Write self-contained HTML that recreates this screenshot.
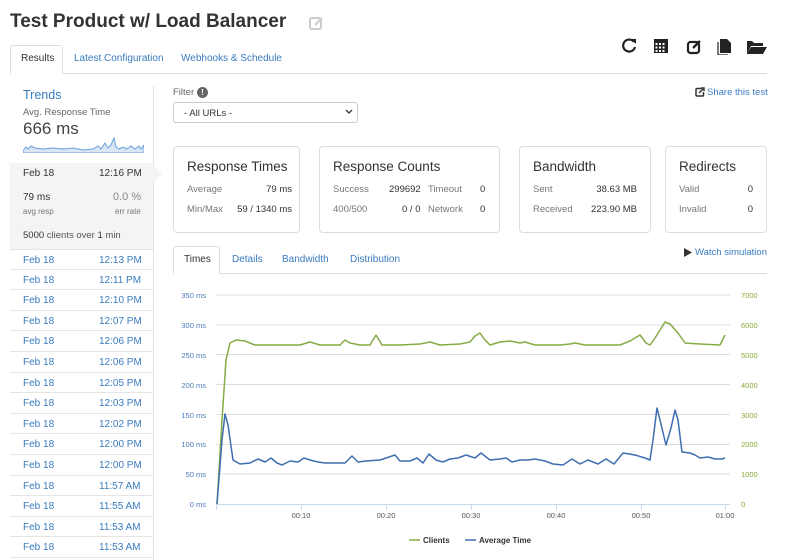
<!DOCTYPE html>
<html><head><meta charset="utf-8"><style>
*{margin:0;padding:0;box-sizing:border-box}
body{width:800px;height:560px;overflow:hidden;background:#fff;font-family:"Liberation Sans",Arial,sans-serif;color:#333;position:relative}
.a{position:absolute;white-space:nowrap}
.blue{color:#3a7bbf}
.card{position:absolute;border:1px solid #ddd;border-radius:4px;top:146px;height:87px}
.card h3{position:absolute;left:13px;top:12px;font-size:13.5px;font-weight:normal;color:#333}
.card .l{position:absolute;font-size:9.5px;color:#777}
.card .v{position:absolute;font-size:9.5px;color:#333;text-align:right}
.row{position:absolute;left:10px;width:143px;height:20.6px;border-bottom:1px solid #e5e5e5;font-size:10px;color:#3a7bbf}
.row span{position:absolute;top:5px}
</style></head><body>
<div class="a" style="left:10px;top:11px;font-size:19px;font-weight:bold;color:#333">Test Product w/ Load Balancer</div>
<svg class="a" style="left:309px;top:15px" width="16" height="16" viewBox="0 0 16 16"><rect x="1" y="3" width="11" height="11" rx="2" fill="none" stroke="#ccc" stroke-width="2"/><path d="M6 10 L13 3" stroke="#ccc" stroke-width="2"/></svg>
<svg class="a" style="left:621px;top:37px" width="150" height="18" viewBox="0 0 150 18">
<path d="M13 5 A6 6 0 1 0 14 10" fill="none" stroke="#222" stroke-width="2.2"/><path d="M10 2 L15 2 L15 7 Z" fill="#222"/>
<rect x="33" y="2" width="14" height="14" fill="#222"/><g fill="#fff"><rect x="34.5" y="6" width="2" height="2"/><rect x="38" y="6" width="2" height="2"/><rect x="41.5" y="6" width="2" height="2"/><rect x="34.5" y="9.5" width="2" height="2"/><rect x="38" y="9.5" width="2" height="2"/><rect x="41.5" y="9.5" width="2" height="2"/><rect x="34.5" y="13" width="2" height="2"/><rect x="38" y="13" width="2" height="2"/><rect x="41.5" y="13" width="2" height="2"/></g>
<rect x="67" y="5" width="11" height="11" rx="2.5" fill="none" stroke="#222" stroke-width="2.2"/><path d="M72 11 L79 4" stroke="#222" stroke-width="2.4"/>
<path d="M99 2 L106 2 L110 6 L110 16 L99 16 Z" fill="#222"/><path d="M97 5 L97 18 L107 18" fill="none" stroke="#222" stroke-width="1.2"/>
<path d="M126 4 L131 4 L133 6 L142 6 L142 9 L130 9 L126 17 Z" fill="#222"/><path d="M130 10 L146 10 L142 17 L126 17 Z" fill="#222"/>
</svg>
<div class="a" style="left:10px;top:45px;width:53px;height:29px;border:1px solid #ddd;border-bottom:1px solid #fff;border-radius:3px 3px 0 0;background:#fff;z-index:2"></div>
<div class="a" style="left:10px;top:73px;width:757px;height:1px;background:#ddd"></div>
<div class="a" style="left:21px;top:53px;font-size:10px;color:#333;z-index:3">Results</div>
<div class="a blue" style="left:74px;top:53px;font-size:10px">Latest Configuration</div>
<div class="a blue" style="left:181px;top:53px;font-size:10px">Webhooks &amp; Schedule</div>
<div class="a" style="left:153px;top:86px;width:1px;height:474px;background:#e5e5e5"></div>
<div class="a blue" style="left:23px;top:88px;font-size:12.5px">Trends</div>
<div class="a" style="left:23px;top:107px;font-size:9.5px;color:#666">Avg. Response Time</div>
<div class="a" style="left:23px;top:119px;font-size:17px;color:#444">666 ms</div>
<svg class="a" style="left:23px;top:133px" width="121" height="20" viewBox="0 0 121 20"><path d="M0 18 L3 14 L5 16 L8 13 L12 15 L20 16 L30 15 L40 16 L50 15 L60 17 L70 16 L75 13 L78 16 L82 10 L85 15 L88 12 L91 5 L93 14 L96 16 L100 14 L104 16 L108 13 L112 16 L116 13 L118 16 L121 12 L121 20 L0 20Z" fill="#d8e6f5" stroke="#6a9fd8" stroke-width="1"/></svg>
<div class="a" style="left:10px;top:163px;width:143px;height:86px;background:#f4f4f4"></div>
<div class="a" style="left:153px;top:165px;width:0;height:0;border-top:9px solid transparent;border-bottom:9px solid transparent;border-left:9px solid #f4f4f4"></div>
<div class="a" style="left:23px;top:168px;font-size:10px;color:#333">Feb 18</div>
<div class="a" style="left:99px;top:168px;font-size:10px;color:#333">12:16 PM</div>
<div class="a" style="left:23px;top:192px;font-size:10px;color:#333">79 ms</div>
<div class="a" style="left:23px;top:207px;font-size:8px;color:#777">avg resp</div>
<div class="a" style="left:113px;top:191px;font-size:11px;color:#888">0.0 %</div>
<div class="a" style="left:115px;top:207px;font-size:8px;color:#777">err rate</div>
<div class="a" style="left:23px;top:230px;font-size:9.5px;color:#555"><b style="font-weight:normal;color:#333">5000</b> clients over <span style="color:#333">1</span> min</div>
<div class="row" style="top:249px;border-top:1px solid #e5e5e5"><span style="left:13px">Feb 18</span><span style="left:89px">12:13 PM</span></div>
<div class="row" style="top:269.6px"><span style="left:13px">Feb 18</span><span style="left:89px">12:11 PM</span></div>
<div class="row" style="top:290.2px"><span style="left:13px">Feb 18</span><span style="left:89px">12:10 PM</span></div>
<div class="row" style="top:310.8px"><span style="left:13px">Feb 18</span><span style="left:89px">12:07 PM</span></div>
<div class="row" style="top:331.4px"><span style="left:13px">Feb 18</span><span style="left:89px">12:06 PM</span></div>
<div class="row" style="top:352px"><span style="left:13px">Feb 18</span><span style="left:89px">12:06 PM</span></div>
<div class="row" style="top:372.6px"><span style="left:13px">Feb 18</span><span style="left:89px">12:05 PM</span></div>
<div class="row" style="top:393.2px"><span style="left:13px">Feb 18</span><span style="left:89px">12:03 PM</span></div>
<div class="row" style="top:413.8px"><span style="left:13px">Feb 18</span><span style="left:89px">12:02 PM</span></div>
<div class="row" style="top:434.4px"><span style="left:13px">Feb 18</span><span style="left:89px">12:00 PM</span></div>
<div class="row" style="top:455px"><span style="left:13px">Feb 18</span><span style="left:89px">12:00 PM</span></div>
<div class="row" style="top:475.6px"><span style="left:13px">Feb 18</span><span style="left:89px">11:57 AM</span></div>
<div class="row" style="top:496.2px"><span style="left:13px">Feb 18</span><span style="left:89px">11:55 AM</span></div>
<div class="row" style="top:516.8px"><span style="left:13px">Feb 18</span><span style="left:89px">11:53 AM</span></div>
<div class="row" style="top:537.4px"><span style="left:13px">Feb 18</span><span style="left:89px">11:53 AM</span></div>
<div class="a" style="left:173px;top:87px;font-size:9.5px;color:#666">Filter</div>
<div class="a" style="left:197px;top:87px;width:11px;height:11px;border-radius:50%;background:#666;color:#fff;font-size:8px;font-weight:bold;text-align:center;line-height:11px">!</div>
<div class="a" style="left:173px;top:102px;width:185px;height:21px;border:1px solid #ccc;border-radius:3px;font-size:9.5px;color:#333;padding:5px 0 0 10px">- All URLs -</div>
<svg class="a" style="left:345px;top:109px" width="8" height="6"><path d="M1 1 L4 4 L7 1" fill="none" stroke="#333" stroke-width="1.3"/></svg>
<svg class="a" style="left:695px;top:87px" width="10" height="10"><path d="M6 1.5 L2 1.5 Q1 1.5 1 2.5 L1 8 Q1 9 2 9 L7.5 9 Q8.5 9 8.5 8 L8.5 5" fill="none" stroke="#333" stroke-width="1.5"/><path d="M4 6 L8 2 M6 1 L9 1 L9 4" fill="none" stroke="#333" stroke-width="1.5"/></svg>
<div class="a blue" style="left:707px;top:87px;font-size:9.5px">Share this test</div>
<div class="card" style="left:173px;width:127px"><h3>Response Times</h3><div class="l" style="left:13px;top:37px">Average</div><div class="v" style="right:7px;top:37px">79 ms</div><div class="l" style="left:13px;top:57px">Min/Max</div><div class="v" style="right:7px;top:57px">59 / 1340 ms</div></div>
<div class="card" style="left:319px;width:181px"><h3>Response Counts</h3><div class="l" style="left:13px;top:37px">Success</div><div class="v" style="left:69px;top:37px">299692</div><div class="l" style="left:108px;top:37px">Timeout</div><div class="v" style="left:160px;top:37px">0</div><div class="l" style="left:13px;top:57px">400/500</div><div class="v" style="left:82px;top:57px">0 / 0</div><div class="l" style="left:108px;top:57px">Network</div><div class="v" style="left:160px;top:57px">0</div></div>
<div class="card" style="left:519px;width:132px"><h3>Bandwidth</h3><div class="l" style="left:13px;top:37px">Sent</div><div class="v" style="right:13px;top:37px">38.63 MB</div><div class="l" style="left:13px;top:57px">Received</div><div class="v" style="right:13px;top:57px">223.90 MB</div></div>
<div class="card" style="left:665px;width:102px"><h3>Redirects</h3><div class="l" style="left:13px;top:37px">Valid</div><div class="v" style="right:13px;top:37px">0</div><div class="l" style="left:13px;top:57px">Invalid</div><div class="v" style="right:13px;top:57px">0</div></div>
<svg class="a" style="left:684px;top:248px" width="8" height="9"><path d="M0 0 L8 4.5 L0 9Z" fill="#333"/></svg>
<div class="a blue" style="left:695px;top:247px;font-size:9.5px">Watch simulation</div>
<div class="a" style="left:173px;top:246px;width:47px;height:28px;border:1px solid #ddd;border-bottom:1px solid #fff;border-radius:3px 3px 0 0;background:#fff;z-index:2"></div>
<div class="a" style="left:173px;top:273px;width:594px;height:1px;background:#ddd"></div>
<div class="a" style="left:184px;top:254px;font-size:10px;color:#333;z-index:3">Times</div>
<div class="a blue" style="left:232px;top:254px;font-size:10px">Details</div>
<div class="a blue" style="left:282px;top:254px;font-size:10px">Bandwidth</div>
<div class="a blue" style="left:350px;top:254px;font-size:10px">Distribution</div>
<svg class="a" style="left:0;top:0" width="800" height="560" viewBox="0 0 800 560">
<g stroke="#ddd" stroke-width="1"><line x1="216" x2="730" y1="295" y2="295"/><line x1="216" x2="730" y1="325" y2="325"/><line x1="216" x2="730" y1="354.5" y2="354.5"/><line x1="216" x2="730" y1="384.5" y2="384.5"/><line x1="216" x2="730" y1="414.5" y2="414.5"/><line x1="216" x2="730" y1="444.5" y2="444.5"/><line x1="216" x2="730" y1="474" y2="474"/></g>
<g stroke="#c8d8ec"><line x1="216" x2="730" y1="504.5" y2="504.5"/><line x1="216.5" x2="216.5" y1="504" y2="510"/><line x1="301.5" x2="301.5" y1="504" y2="510"/><line x1="386.5" x2="386.5" y1="504" y2="510"/><line x1="471.5" x2="471.5" y1="504" y2="510"/><line x1="556.5" x2="556.5" y1="504" y2="510"/><line x1="641.5" x2="641.5" y1="504" y2="510"/><line x1="725.5" x2="725.5" y1="504" y2="510"/></g>
<g font-family="Liberation Sans,sans-serif" font-size="7.5" fill="#4a7ab8" text-anchor="end"><text x="206" y="298">350 ms</text><text x="206" y="328">300 ms</text><text x="206" y="358">250 ms</text><text x="206" y="388">200 ms</text><text x="206" y="418">150 ms</text><text x="206" y="447">100 ms</text><text x="206" y="477">50 ms</text><text x="206" y="507">0 ms</text></g>
<g font-family="Liberation Sans,sans-serif" font-size="7.5" fill="#8aaa3c"><text x="741" y="298">7000</text><text x="741" y="328">6000</text><text x="741" y="358">5000</text><text x="741" y="388">4000</text><text x="741" y="418">3000</text><text x="741" y="447">2000</text><text x="741" y="477">1000</text><text x="741" y="507">0</text></g>
<g font-family="Liberation Sans,sans-serif" font-size="7.5" fill="#555" text-anchor="middle"><text x="301" y="518">00:10</text><text x="386" y="518">00:20</text><text x="471" y="518">00:30</text><text x="556" y="518">00:40</text><text x="641" y="518">00:50</text><text x="725" y="518">01:00</text></g>
<polyline fill="none" stroke="#86ab45" stroke-width="1.5" stroke-linejoin="round" points="217,504 222,420 226,360 230,343 236,340 245,341 255,345 270,345 300,345 310,342 320,345 340,345 345,340 350,343 360,345 370,345 376,335 382,345 400,345 420,344 430,342 440,345 460,344 470,342 475,336 480,333 485,340 490,345 500,342 510,341 520,343 525,342 535,345 560,345 570,344 575,343 585,345 620,345 630,341 640,335 646,343 650,345 655,338 665,322 670,324 678,333 685,343 700,344 720,345 725,335"/>
<polyline fill="none" stroke="#3f6fb0" stroke-width="1.5" stroke-linejoin="round" points="217,504 222,440 225,414 228,425 233,460 240,464 250,463 258,459 265,462 271,458 277,463 282,465 290,461 298,462 304,458 310,460 318,462 325,463 345,463 352,456 358,462 366,461 380,460 395,455 400,461 410,461 417,458 423,463 429,454 436,460 443,462 450,459 458,458 466,455 475,458 481,453 490,460 500,459 506,458 512,462 520,460 528,460 535,459 545,461 553,464 563,465 572,459 580,464 588,460 598,464 606,459 614,464 623,453 635,455 645,458 650,460 653,440 657,408 660,420 666,445 671,428 675,410 678,420 682,452 690,453 695,455 700,458 708,457 715,459 722,459 725,458"/>
<line x1="409" x2="420" y1="540" y2="540" stroke="#86ab45" stroke-width="1.5"/>
<text x="423" y="543" font-family="Liberation Sans,sans-serif" font-size="8" font-weight="bold" fill="#333">Clients</text>
<line x1="465" x2="476" y1="540" y2="540" stroke="#3f6fb0" stroke-width="1.5"/>
<text x="479" y="543" font-family="Liberation Sans,sans-serif" font-size="8" font-weight="bold" fill="#333">Average Time</text>
</svg>
</body></html>
